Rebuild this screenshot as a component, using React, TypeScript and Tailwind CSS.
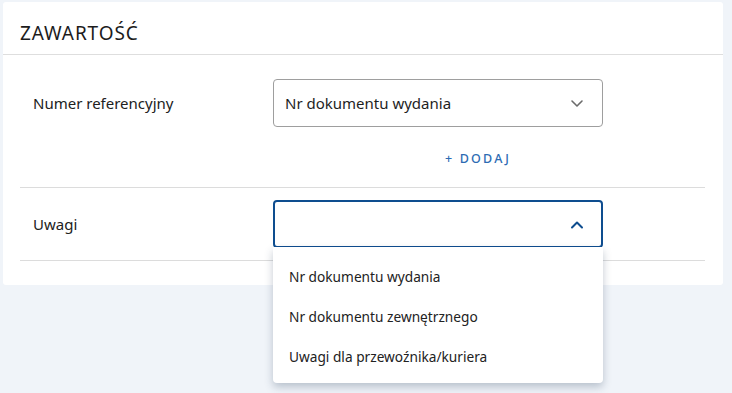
import React from 'react';

const Chevron: React.FC<{ up?: boolean; className?: string }> = ({ up, className }) => (
  <svg width="14" height="9" viewBox="0 0 14 9" className={className} fill="none">
    <path
      d={up ? 'M2 7.5 L7 2.5 L12 7.5' : 'M2 2 L7 7 L12 2'}
      stroke="currentColor"
      strokeWidth={up ? 2 : 1.6}
      strokeLinecap="round"
      strokeLinejoin="round"
    />
  </svg>
);

const options = ['Nr dokumentu wydania', 'Nr dokumentu zewnętrznego', 'Uwagi dla przewoźnika/kuriera'];

export default function App() {
  return (
    <div className="h-[393px] w-[732px] bg-[#f0f4f9] pt-[2px] pl-[3px] overflow-hidden" style={{ fontFamily: '"Noto Sans", Roboto, sans-serif' }}>
      <div className="w-[720px] h-[283px] bg-white rounded-[3px]">
        {/* Header */}
        <div className="h-[53px] border-b border-[#dedede] flex items-center px-[17px] pt-[10px]">
          <h2 className="text-[19px] text-[#1c1c1c] tracking-[0.9px]">ZAWARTOŚĆ</h2>
        </div>

        {/* Body */}
        <div className="pl-[17px] pr-[18px]">
          <div className="pt-[24px] pb-[20px] border-b border-[#dcdcdc]">
            <div className="flex items-center">
              <span className="w-[253px] pl-[13px] text-[15px] text-[#212121]">Numer referencyjny</span>
              <div className="w-[330px] h-[48px] border border-[#9e9e9e] rounded-[4px] flex items-center justify-between pl-[11px] pr-[18px]">
                <span className="text-[15px] text-[#1e1e1e]">Nr dokumentu wydania</span>
                <Chevron className="text-[#6b6b6b]" />
              </div>
            </div>
            <div className="flex justify-end w-[583px] mt-[23px] pr-[92px]">
              <button className="text-[12.5px] leading-[17px] font-medium tracking-[2.2px] text-[#2d6bb3]">+ DODAJ</button>
            </div>
          </div>

          <div className="py-[12px] border-b border-[#dcdcdc]">
            <div className="flex items-center">
              <span className="w-[253px] pl-[13px] text-[15px] text-[#212121]">Uwagi</span>
              <div className="relative w-[330px]">
                <div className="h-[48px] border-2 border-[#0e4d8f] rounded-[4px] flex items-center justify-end pr-[17px]">
                  <Chevron up className="text-[#0e4d8f]" />
                </div>
                <div className="absolute left-0 top-[47px] w-[330px] bg-white rounded-b-[4px] shadow-[0_4px_8px_rgba(40,60,90,0.28)] pt-[10px] pb-[6px] z-10">
                  {options.map((o) => (
                    <div key={o} className="h-[40px] flex items-center px-[16px] text-[13.7px] text-[#222]">
                      {o}
                    </div>
                  ))}
                </div>
              </div>
            </div>
          </div>
        </div>
      </div>
    </div>
  );
}
